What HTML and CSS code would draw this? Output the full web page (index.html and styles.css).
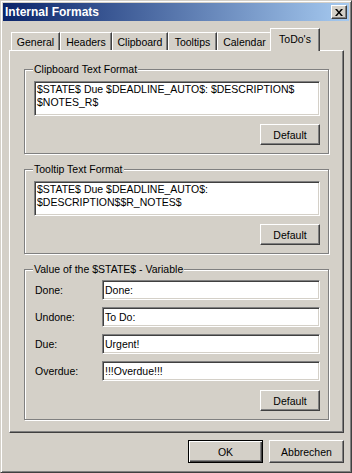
FILE: index.html
```html
<!DOCTYPE html>
<html lang="en">
<head>
    <meta charset="UTF-8">
    <title>Internal Formats</title>
    <link rel="stylesheet" href="styles.css">
</head>
<body>
    <div class="window">
        <div class="titlebar">
            <span class="title">Internal Formats</span>
            <button class="close" title="Close">
                <svg width="8" height="7" viewBox="0 0 8 7">
                    <path d="M0 0h2l2 2.5 2-2.5h2l-3 3.5 3 3.5h-2l-2-2.5-2 2.5h-2l3-3.5z" fill="#000"/>
                </svg>
            </button>
        </div>

        <div class="client">
            <div class="tabs">
                <div class="tab tab-general">General</div>
                <div class="tab tab-headers">Headers</div>
                <div class="tab tab-clipboard">Clipboard</div>
                <div class="tab tab-tooltips">Tooltips</div>
                <div class="tab tab-calendar">Calendar</div>
                <div class="tab tab-todo active">ToDo's</div>
            </div>

            <div class="panel">
                <fieldset class="group group-clipboard">
                    <legend>Clipboard Text Format</legend>
                    <textarea class="format-text" spellcheck="false">$STATE$ Due $DEADLINE_AUTO$: $DESCRIPTION$ $NOTES_R$</textarea>
                    <div class="group-actions">
                        <button class="btn btn-small">Default</button>
                    </div>
                </fieldset>

                <fieldset class="group group-tooltip">
                    <legend>Tooltip Text Format</legend>
                    <textarea class="format-text" spellcheck="false">$STATE$ Due $DEADLINE_AUTO$: $DESCRIPTION$$R_NOTES$</textarea>
                    <div class="group-actions">
                        <button class="btn btn-small">Default</button>
                    </div>
                </fieldset>

                <fieldset class="group group-state">
                    <legend>Value of the $STATE$ - Variable</legend>
                    <div class="state-rows">
                        <label class="state-label" for="stateDone">Done:</label>
                        <input class="state-input" id="stateDone" value="Done:">
                        <label class="state-label" for="stateUndone">Undone:</label>
                        <input class="state-input" id="stateUndone" value="To Do:">
                        <label class="state-label" for="stateDue">Due:</label>
                        <input class="state-input" id="stateDue" value="Urgent!">
                        <label class="state-label" for="stateOverdue">Overdue:</label>
                        <input class="state-input" id="stateOverdue" value="!!!Overdue!!!">
                    </div>
                    <div class="group-actions state-actions">
                        <button class="btn btn-small">Default</button>
                    </div>
                </fieldset>
            </div>

            <div class="dialog-actions">
                <button class="btn btn-dialog btn-default">OK</button>
                <button class="btn btn-dialog">Abbrechen</button>
            </div>
        </div>
    </div>
</body>
</html>
```

FILE: styles.css
```css
:root {
    --face: #d4d0c8;
    --light: #ffffff;
    --shadow: #808080;
    --dark: #404040;
}

* {
    box-sizing: border-box;
}

body {
    margin: 0;
    background-color: var(--face);
    font-family: "Liberation Sans", Arial, sans-serif;
    font-size: 10.5px;
    color: #000;
}

.window {
    width: 352px;
    height: 473px;
    padding: 2px;
    background-color: var(--face);
    border: 1px solid;
    border-color: var(--face) var(--dark) var(--dark) var(--face);
    box-shadow: inset 1px 1px var(--light), inset -1px -1px var(--shadow);
    display: flex;
    flex-direction: column;
}

.titlebar {
    height: 18px;
    flex: none;
    display: flex;
    align-items: center;
    justify-content: space-between;
    padding: 0 2px 0 2px;
    background: linear-gradient(to right, #0a246a, #a6caf0);
}

.title {
    color: #fff;
    font-weight: bold;
    font-size: 12px;
}

.close {
    width: 16px;
    height: 14px;
    padding: 0;
    margin: 0;
    display: flex;
    align-items: center;
    justify-content: center;
    background-color: var(--face);
    border: 1px solid;
    border-color: var(--light) var(--dark) var(--dark) var(--light);
    box-shadow: inset -1px -1px var(--shadow);
}

.client {
    flex: 1;
    padding: 7px 5px 0 6px;
    display: flex;
    flex-direction: column;
}

/* tab strip */
.tabs {
    height: 22px;
    display: flex;
    align-items: flex-end;
    padding-left: 2px;
}

.tab {
    height: 18px;
    display: flex;
    align-items: center;
    justify-content: center;
    border-top: 1px solid var(--light);
    border-left: 1px solid var(--light);
    border-right: 1px solid var(--dark);
    box-shadow: inset -1px 0 var(--shadow);
    background-color: var(--face);
    padding-top: 1px;
}

.tab-general { width: 49px; }
.tab-headers { width: 52px; }
.tab-clipboard { width: 56px; }
.tab-tooltips { width: 49px; }
.tab-calendar { width: 55px; }

.tab.active {
    width: 50px;
    height: 23px;
    margin: 0 -2px -1px -2px;
    padding-top: 0;
    padding-bottom: 2px;
    position: relative;
    z-index: 1;
}

.panel {
    height: 383px;
    flex: none;
    border: 1px solid;
    border-color: var(--light) var(--dark) var(--dark) var(--light);
    box-shadow: inset -1px -1px var(--shadow);
    padding: 12px 0 0 14px;
}

/* group boxes */
.group {
    width: 305px;
    margin: 0;
    padding: 0 8px 8px 9px;
    border: 1px solid var(--shadow);
    box-shadow: inset 1px 1px var(--light), 1px 1px var(--light);
    min-inline-size: 0;
}

.group + .group {
    margin-top: 9px;
}

.group legend {
    margin-left: -1px;
    padding: 0 1px;
    line-height: 13px;
    background-color: var(--face);
}

.format-text {
    display: block;
    width: 100%;
    height: 35px;
    margin: 5px 0 0 0;
    padding: 1px 2px;
    font-family: inherit;
    font-size: inherit;
    line-height: 13px;
    resize: none;
    overflow: hidden;
    background-color: #fff;
    border: 1px solid;
    border-color: var(--shadow) var(--light) var(--light) var(--shadow);
    box-shadow: inset 1px 1px var(--dark), inset -1px -1px var(--face);
    outline: none;
}

.group-actions {
    display: flex;
    justify-content: flex-end;
    margin-top: 8px;
}

.btn {
    font-family: inherit;
    font-size: inherit;
    color: #000;
    padding: 0;
    background-color: var(--face);
    border: 1px solid;
    border-color: var(--light) var(--dark) var(--dark) var(--light);
    box-shadow: inset -1px -1px var(--shadow);
}

.btn-small {
    width: 60px;
    height: 21px;
}

/* state values */
.state-rows {
    margin-top: 4px;
    display: grid;
    grid-template-columns: 68px 1fr;
    row-gap: 7px;
    align-items: center;
}

.state-label {
    padding-left: 1px;
}

.state-input {
    height: 20px;
    width: 100%;
    padding: 0 2px;
    font-family: inherit;
    font-size: inherit;
    background-color: #fff;
    border: 1px solid;
    border-color: var(--shadow) var(--light) var(--light) var(--shadow);
    box-shadow: inset 1px 1px var(--dark), inset -1px -1px var(--face);
    outline: none;
}

.state-actions {
    margin-top: 9px;
}

/* OK / Abbrechen */
.dialog-actions {
    display: flex;
    justify-content: flex-end;
    gap: 6px;
    margin-top: 7px;
}

.btn-dialog {
    width: 75px;
    height: 23px;
}

.btn-default {
    border: 1px solid #000;
    box-shadow: inset 1px 1px var(--light), inset -1px -1px var(--dark), inset -2px -2px var(--shadow);
}
```
